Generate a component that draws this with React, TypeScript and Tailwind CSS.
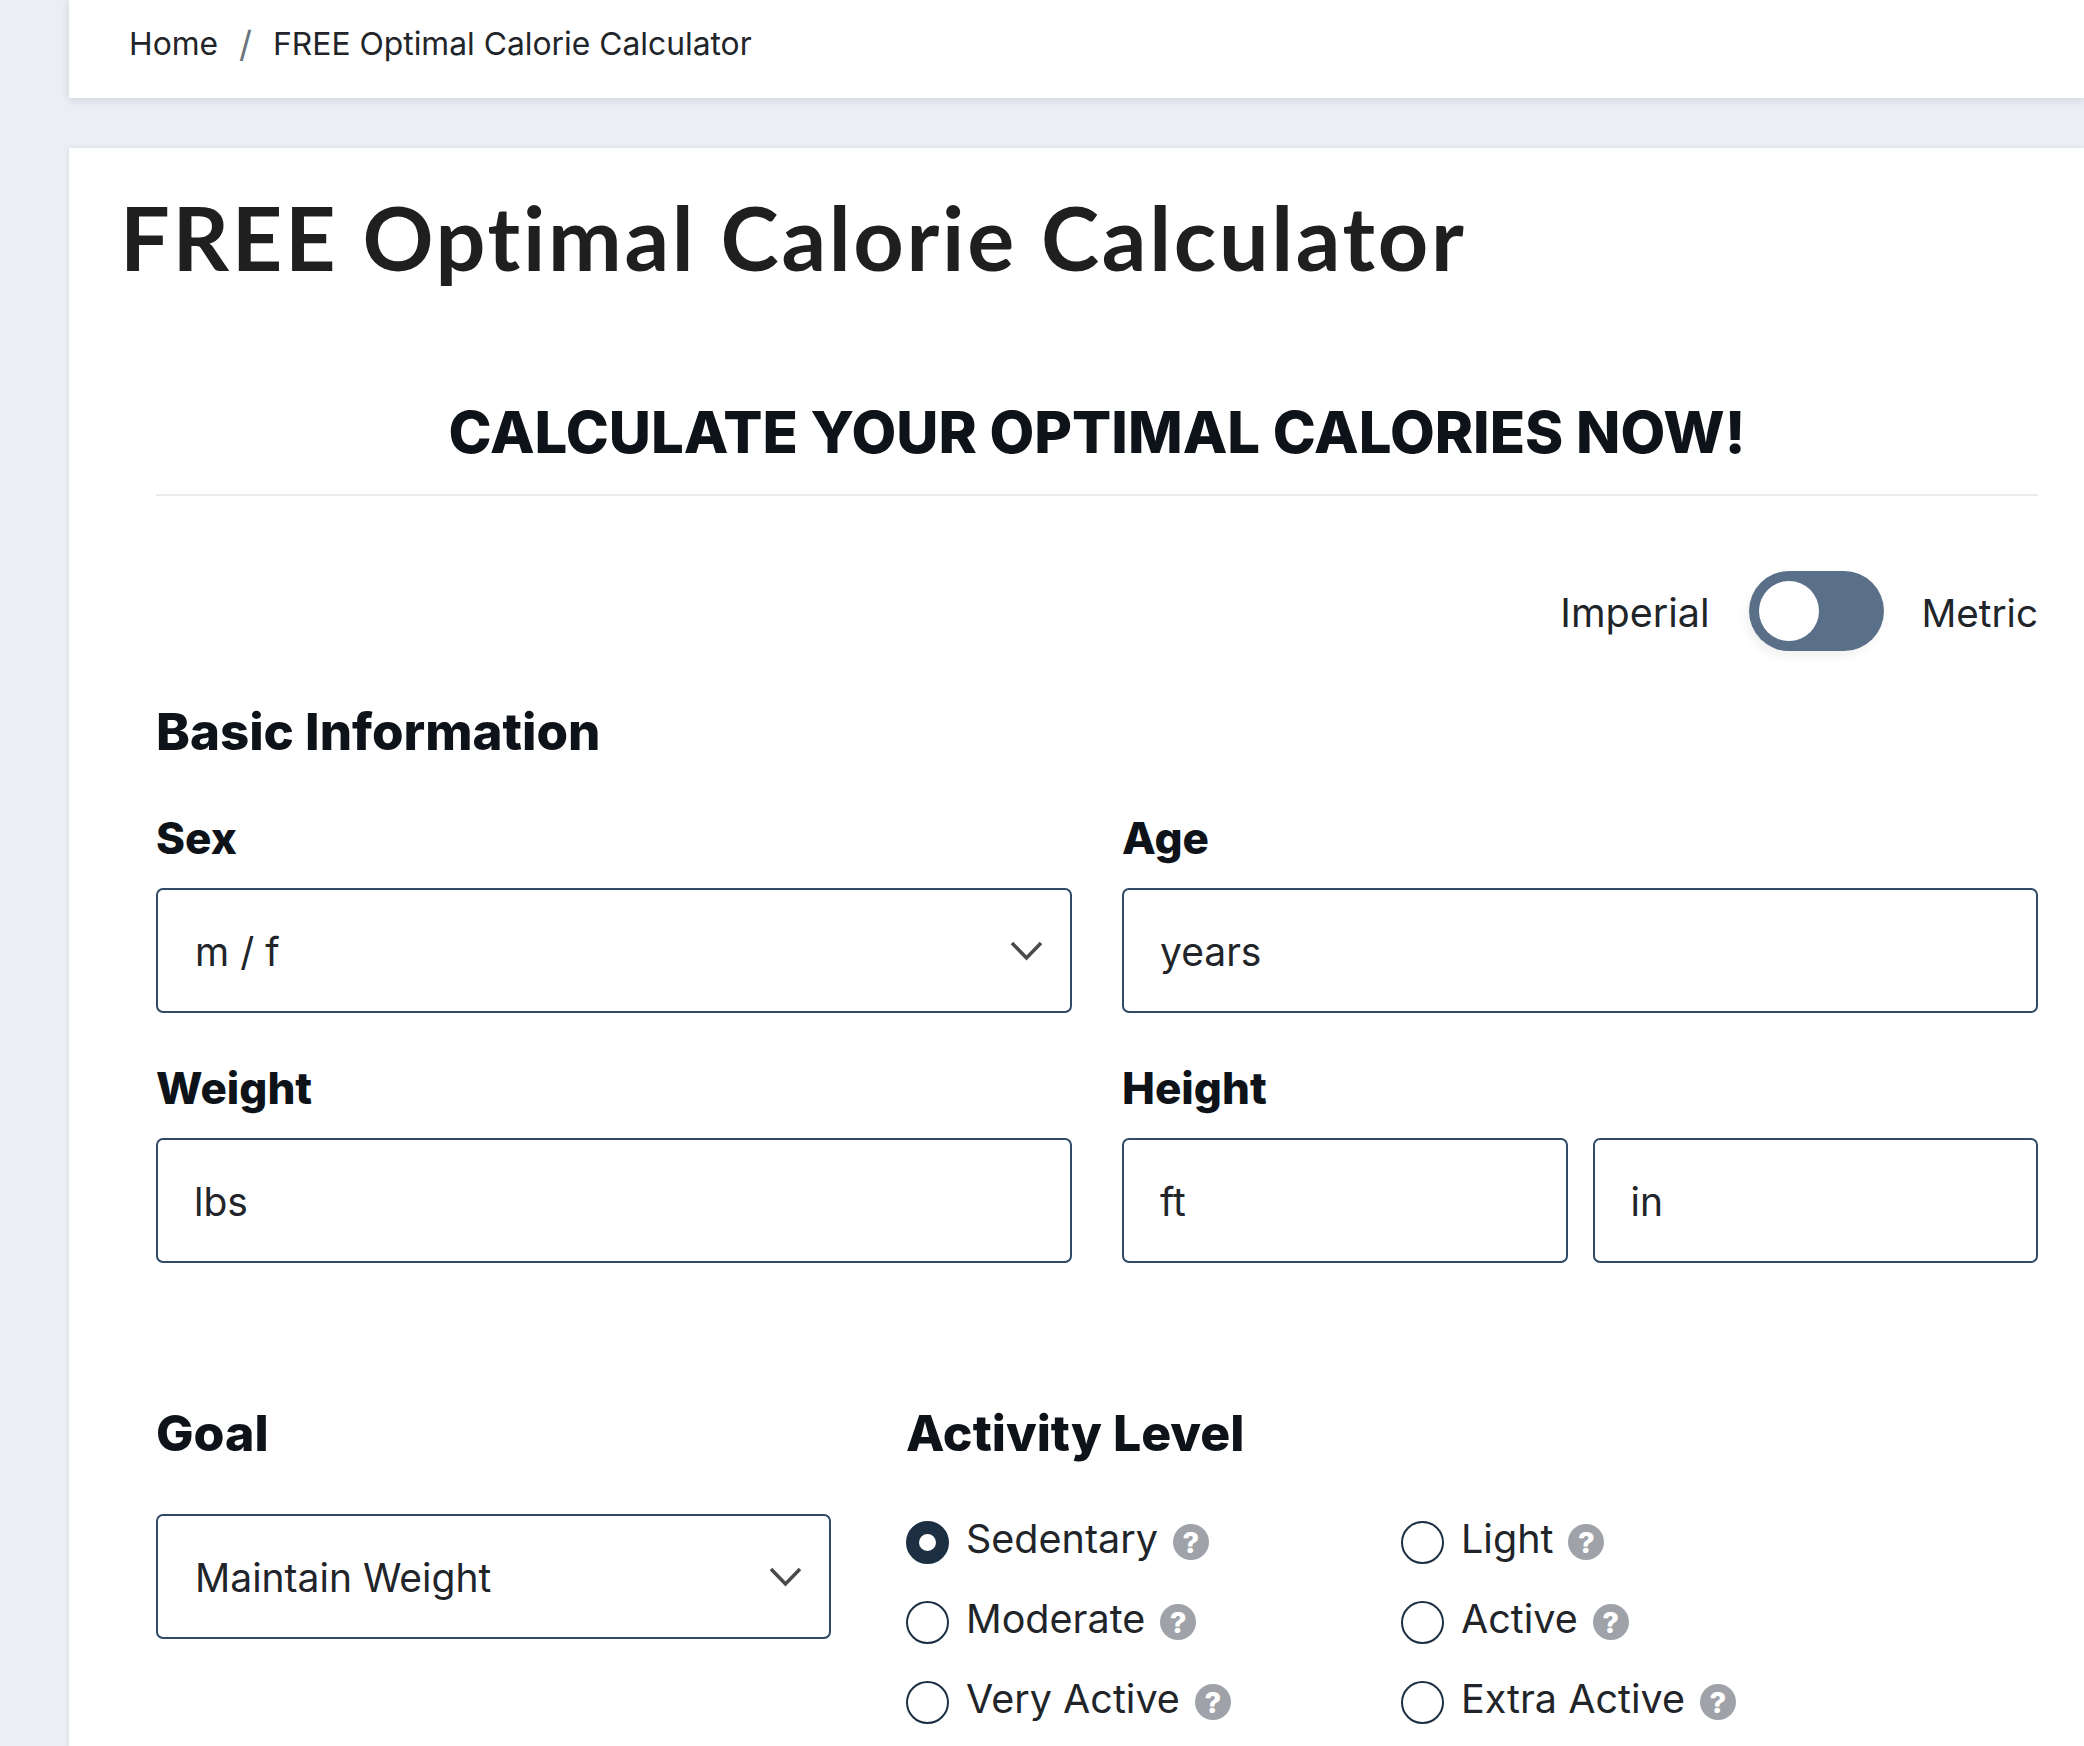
import React from 'react';

const body = "font-['Inter','Liberation_Sans',sans-serif]";

const Chevron = () => (
  <svg className="absolute right-[29px] top-[53px] pointer-events-none" width="33" height="20" viewBox="0 0 33 20" fill="none">
    <path d="M2 2 L16.5 17 L31 2" stroke="#4a4a4a" strokeWidth="3.5" />
  </svg>
);

const Field = ({ placeholder, className = '' }: { placeholder: string; className?: string }) => (
  <input
    type="text"
    placeholder={placeholder}
    className={`h-[125px] w-full min-w-0 rounded-[7px] border-2 border-[#2f4a66] bg-white px-[36px] pt-[2px] text-[39px] text-[#212529] outline-none placeholder:text-[#212529] ${className}`}
  />
);

const Select = ({ value }: { value: string }) => (
  <div className="relative">
    <select className="h-[125px] w-full appearance-none rounded-[7px] border-2 border-[#2f4a66] bg-white px-[37px] pt-[4px] text-[39px] text-[#212529] outline-none">
      <option>{value}</option>
    </select>
    <Chevron />
  </div>
);

const Radio = ({ label, checked = false }: { label: string; checked?: boolean }) => (
  <label className="flex h-[80px] items-start gap-[17px]">
    <span
      className={`mt-[1px] box-border h-[43px] w-[43px] shrink-0 rounded-full bg-white ${
        checked ? 'border-[13px] border-[#1d2f43]' : 'border-2 border-[#1d2f43]'
      }`}
    />
    <span className="mt-[1px] text-[39.5px] leading-[36px] text-[#212529]">{label}</span>
    <span className="ml-[-2px] mt-[4px] flex h-[36px] w-[36px] shrink-0 items-center justify-center rounded-full bg-[#9fa2a8] text-[29px] font-extrabold leading-none text-white">
      ?
    </span>
  </label>
);

export default function App() {
  return (
    <div className={`h-[1746px] overflow-hidden bg-[#ebeef3] pl-[69px] ${body}`}>
      {/* Breadcrumb */}
      <div className="flex h-[98px] items-start bg-white pl-[60px] pt-[25px] text-[31.8px] leading-[38px] text-[#212529] shadow-[0_2px_8px_rgba(50,60,80,0.15)]">
        <span>Home</span>
        <span className="mx-[21px] text-[36px] text-[#6c757d]">/</span>
        <span>FREE Optimal Calorie Calculator</span>
      </div>

      <div className="mt-[50px] h-[1600px] bg-white shadow-[0_0_4px_rgba(50,60,80,0.12)]">
        <h1 className="pl-[51px] pt-[37px] font-['Lato',sans-serif] text-[88px] font-bold leading-[104px] tracking-[2.7px] text-[#1f1f1f]">
          FREE Optimal Calorie Calculator
        </h1>

        <div className="pl-[87px] pr-[46px] pt-[108px]">
          <h2 className="border-b-2 border-[#e9ecef] pb-[27px] text-center text-[58px] font-extrabold leading-[70px] text-[#0d1318]">
            CALCULATE YOUR OPTIMAL CALORIES NOW!
          </h2>

          {/* Unit toggle */}
          <div className="mt-[75px] flex items-center justify-end text-[#212529]">
            <span className="mt-[5px] text-[39.5px]">Imperial</span>
            <div className="ml-[39px] mr-[38px] flex h-[80px] w-[135px] items-center rounded-full bg-[#5a6f88] pl-[10px] shadow-[-4px_6px_8px_rgba(0,0,0,0.05)]">
              <span className="h-[60px] w-[60px] rounded-full bg-white" />
            </div>
            <span className="mt-[5px] text-[38.6px]">Metric</span>
          </div>

          <h3 className="mt-[50px] text-[51px] font-extrabold leading-[62px] text-[#0d1318]">Basic Information</h3>

          <div className="mt-[50px] grid grid-cols-2 gap-x-[50px]">
            <div>
              <label className="block text-[44px] font-extrabold leading-[50px] text-[#0d1318]">Sex</label>
              <div className="mt-[25px]">
                <Select value="m / f" />
              </div>
            </div>
            <div>
              <label className="block text-[44px] font-extrabold leading-[50px] text-[#0d1318]">Age</label>
              <div className="mt-[25px]">
                <Field placeholder="years" />
              </div>
            </div>
            <div className="mt-[50px]">
              <label className="block text-[44px] font-extrabold leading-[50px] text-[#0d1318]">Weight</label>
              <div className="mt-[25px]">
                <Field placeholder="lbs" />
              </div>
            </div>
            <div className="mt-[50px]">
              <label className="block text-[44px] font-extrabold leading-[50px] text-[#0d1318]">Height</label>
              <div className="mt-[25px] grid grid-cols-2 gap-x-[25px]">
                <Field placeholder="ft" />
                <Field placeholder="in" />
              </div>
            </div>
          </div>

          <div className="mt-[140px] flex">
            <div className="w-[675px] shrink-0">
              <h3 className="text-[50px] font-extrabold leading-[60px] text-[#0d1318]">Goal</h3>
              <div className="mt-[51px]">
                <Select value="Maintain Weight" />
              </div>
            </div>
            <div className="ml-[75px] flex-1">
              <h3 className="text-[50px] font-extrabold leading-[60px] text-[#0d1318]">Activity Level</h3>
              <div className="mt-[57px] grid grid-cols-[495px_1fr]">
                <Radio label="Sedentary" checked />
                <Radio label="Light" />
                <Radio label="Moderate" />
                <Radio label="Active" />
                <Radio label="Very Active" />
                <Radio label="Extra Active" />
              </div>
            </div>
          </div>
        </div>
      </div>
    </div>
  );
}
